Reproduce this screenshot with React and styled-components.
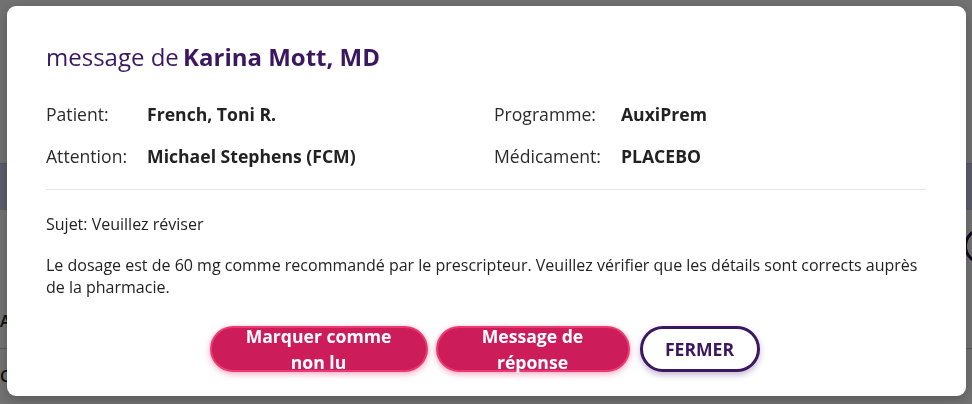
import React from 'react'
import styled, { createGlobalStyle } from 'styled-components'

const GlobalStyle = createGlobalStyle`
    html, body {
        margin: 0;
        padding: 0;
        background: #ffffff;
        font-family: "Open Sans", "Noto Sans", sans-serif;
    }
`

const details = [
    [
        { label: 'Patient:', value: 'French, Toni R.' },
        { label: 'Attention:', value: 'Michael Stephens (FCM)' },
    ],
    [
        { label: 'Programme:', value: 'AuxiPrem' },
        { label: 'Médicament:', value: 'PLACEBO' },
    ],
]

const App = () => {
    return (
        <>
            <GlobalStyle />
            <Page>
                <PageHeader />
                <PageBand />
                <PageBody>
                    <PageToolbar>
                        <RoundIcon />
                    </PageToolbar>
                    <PageRow>AI</PageRow>
                    <PageRow>C</PageRow>
                </PageBody>
            </Page>
            <Overlay>
                <Modal role="dialog">
                    <Title>message de <strong>Karina Mott, MD</strong></Title>
                    <Details>
                        {details.map((column, ci) => (
                            <Column key={ci}>
                                {column.map(item => (
                                    <React.Fragment key={item.label}>
                                        <Label>{item.label}</Label>
                                        <Value>{item.value}</Value>
                                    </React.Fragment>
                                ))}
                            </Column>
                        ))}
                    </Details>
                    <Divider />
                    <Subject>Sujet: Veuillez réviser</Subject>
                    <Body>
                        Le dosage est de 60 mg comme recommandé par le prescripteur. Veuillez vérifier que les détails sont corrects auprès de la pharmacie.
                    </Body>
                    <Actions>
                        <Button width={218}>Marquer comme non lu</Button>
                        <Button width={194}>Message de réponse</Button>
                        <Button width={120} outline>FERMER</Button>
                    </Actions>
                </Modal>
            </Overlay>
        </>
    )
}

export default App

const Page = styled.div`
    height: 404px;
    display: flex;
    flex-direction: column;
    overflow: hidden;
`
const PageHeader = styled.div`
    height: 163px;
    background: #fbfbfb;
`
const PageBand = styled.div`
    height: 46px;
    background: #ccd0ee;
    border-top: 1px solid #b9bce0;
`
const PageBody = styled.div`
    flex: 1;
    display: flex;
    flex-direction: column;
    padding-top: 18px;
`
const PageToolbar = styled.div`
    height: 36px;
    margin-bottom: 46px;
    display: flex;
    justify-content: flex-end;
`
const RoundIcon = styled.span`
    width: 36px;
    height: 36px;
    box-sizing: border-box;
    border-radius: 50%;
    border: 3px solid #2a0f48;
    margin-right: -28px;
`
const PageRow = styled.div`
    height: 38px;
    border-bottom: 1px solid #c8c8c8;
    font: 600 16px "Open Sans", sans-serif;
    color: #222;
    &:last-child { border-bottom: none; padding-top: 16px; }
`
const Overlay = styled.div`
    position: fixed;
    inset: 0;
    background: rgba(0, 0, 0, 0.55);
    padding: 6px 6px 0 7px;
`
const Modal = styled.div`
    background: #ffffff;
    border-radius: 9px;
    box-shadow: 0 4px 14px rgba(0, 0, 0, 0.25);
    padding: 35px 40px 24px 39px;
    display: flex;
    flex-direction: column;
    height: 390px;
    box-sizing: border-box;
`
const Title = styled.h2`
    margin: 0;
    font-size: 24px;
    line-height: 32px;
    font-weight: 400;
    color: #3b1762;
    strong {
        font-weight: 700;
        margin-left: -2px;
    }
`
const Details = styled.div`
    display: grid;
    grid-template-columns: 1fr 1fr;
    column-gap: 16px;
    margin-top: 29px;
`
const Column = styled.div`
    display: grid;
    grid-template-columns: auto 1fr;
    column-gap: 20px;
    row-gap: 18px;
    font-size: 17.6px;
    line-height: 24px;
    color: #2b2b2b;
`
const Label = styled.span`
    white-space: nowrap;
`
const Value = styled.span`
    font-weight: 700;
    color: #222;
`
const Divider = styled.hr`
    border: none;
    border-top: 1px solid #e4e4ee;
    margin: 21px 0 0;
`
const Subject = styled.p`
    margin: 23px 0 0;
    font-size: 16px;
    line-height: 22px;
    color: #222;
`
const Body = styled.p`
    margin: 19px 0 0;
    font-size: 16px;
    line-height: 22px;
    color: #222;
`
const Actions = styled.div`
    display: flex;
    justify-content: center;
    gap: 8px;
    margin-top: 28px;
    margin-left: -3px;
    & > :last-child {
        margin-left: 2px;
    }
`
const Button = styled.button`
    width: ${props => props.width}px;
    height: 46px;
    border-radius: 23px;
    box-sizing: border-box;
    display: flex;
    align-items: center;
    justify-content: center;
    text-align: center;
    font-family: "Open Sans", sans-serif;
    font-weight: 700;
    font-size: 17.6px;
    line-height: 26px;
    padding: 0 20px;
    cursor: pointer;
    background: ${props => props.outline ? '#ffffff' : '#cc1c5a'};
    color: ${props => props.outline ? '#3b1762' : '#ffffff'};
    border: ${props => props.outline ? '3px solid #3b1762' : '2px solid #ec3a70'};
    box-shadow: ${props => props.outline ? '0 3px 6px rgba(59, 23, 98, 0.3)' : '0 2px 6px rgba(236, 58, 112, 0.45)'};
`
